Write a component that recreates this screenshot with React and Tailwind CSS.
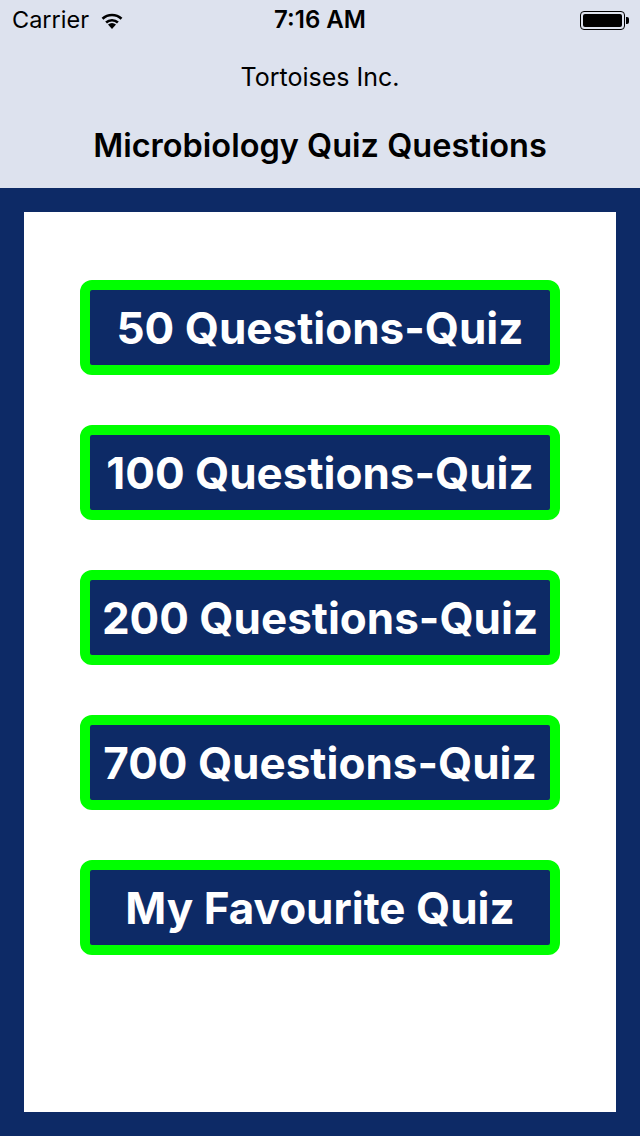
import React from "react";

const quizzes = [
  "50 Questions-Quiz",
  "100 Questions-Quiz",
  "200 Questions-Quiz",
  "700 Questions-Quiz",
  "My Favourite Quiz",
];

const WifiIcon = () => (
  <svg width="24" height="18" viewBox="0 0 24 18" className="ml-[11px]">
    <path d="M12 18 L8 13.6 A6 6 0 0 1 16 13.6 Z" fill="#000" />
    <path d="M5.2 10.6 A10 10 0 0 1 18.8 10.6 L17 12.5 A7.4 7.4 0 0 0 7 12.5 Z" fill="#000" />
    <path d="M1.6 6.8 A15.2 15.2 0 0 1 22.4 6.8 L20.6 8.7 A12.6 12.6 0 0 0 3.4 8.7 Z" fill="#000" />
  </svg>
);

const Battery = () => (
  <div className="flex items-center">
    <div className="w-[45px] h-[19px] rounded-[4px] border border-black p-[2px]">
      <div className="w-full h-full bg-black rounded-[2px]" />
    </div>
    <div className="w-[3px] h-[7px] bg-black rounded-r-[2px] ml-[1px]" />
  </div>
);

const App = () => {
  return (
    <div className="w-[640px] h-[1136px] flex flex-col font-['Inter','Liberation_Sans',sans-serif]">
      <div className="h-[188px] bg-[#dde2ee] flex flex-col">
        <div className="h-[40px] flex items-center justify-between pl-[12px] pr-[11px] relative">
          <div className="flex items-center text-[23.5px] text-black">
            Carrier
            <WifiIcon />
          </div>
          <div className="absolute left-0 right-0 text-center text-[24px] font-semibold text-black">
            7:16 AM
          </div>
          <Battery />
        </div>
        <div className="text-center text-[25px] leading-[30px] text-black mt-[22px]">
          Tortoises Inc.
        </div>
        <div className="text-center text-[32.5px] leading-[40px] font-semibold text-black mt-[34px]">
          Microbiology Quiz Questions
        </div>
      </div>
      <div className="flex-1 bg-[#0d2a66] p-[24px]">
        <div className="h-full bg-white flex flex-col items-center pt-[68px] gap-[50px]">
          {quizzes.map((quiz) => (
            <button
              key={quiz}
              className="w-[480px] h-[95px] rounded-[12px] border-[10px] border-[#00ff00] bg-[#0d2a66] text-white text-[44px] font-bold flex items-center justify-center whitespace-nowrap"
            >
              {quiz}
            </button>
          ))}
        </div>
      </div>
    </div>
  );
};

export default App;
